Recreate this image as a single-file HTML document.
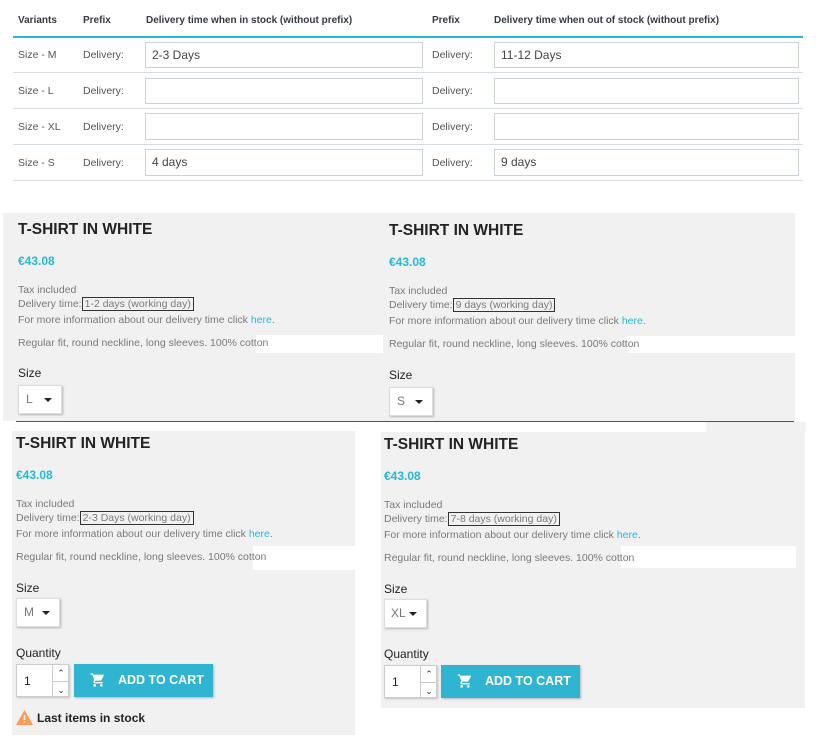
<!DOCTYPE html>
<html><head><meta charset="utf-8"><style>
*{margin:0;padding:0;box-sizing:border-box}
body{width:823px;height:750px;background:#fff;position:relative;overflow:hidden;font-family:"Liberation Sans",sans-serif;color:#363a41}
.a{position:absolute;white-space:nowrap}
.th{font-size:10px;font-weight:bold;color:#363a41}
.td{font-size:10.5px;color:#555}
.inp{position:absolute;border:1px solid #ccd3d8;background:#fff;font-size:12px;color:#444;padding-left:6px;line-height:25px}
.sep{position:absolute;left:13px;width:790px;height:1px;background:#d5dde2}
.g{position:absolute;background:#f1f1f1}
.w{position:absolute;background:#fff}
.t{font-size:15.5px;font-weight:bold;color:#232323}
.p{font-size:12px;font-weight:bold;color:#24b9d7}
.s{font-size:10.5px;color:#7a7a7a}
.s a{color:#24b9d7;text-decoration:none}
.box{border:1px solid #333;padding:0 2px;color:#7a7a7a}
.lbl{font-size:12px;color:#232323}
.sel{position:absolute;background:#fff;box-shadow:1px 1px 2px rgba(0,0,0,.25);border:1px solid #ddd;font-size:12px;color:#7a7a7a;padding-left:7px;line-height:26px}
.sel:after{content:"";position:absolute;right:9px;top:12px;border:4px solid transparent;border-top:4px solid #222;border-bottom:0}
.q{position:absolute;background:#fff;border:1px solid #ccc;box-shadow:1px 1px 2px rgba(0,0,0,.2);width:53px;height:33px}
.q span{position:absolute;left:7px;top:9px;font-size:12px;color:#232323}
.q i{position:absolute;left:35px;width:17px;height:16px;border-left:1px solid #ccc;font-style:normal;font-size:9px;text-align:center;line-height:16px;color:#333}
.btn{position:absolute;background:#2fb5d2;width:139px;height:33px;box-shadow:1px 1px 2px rgba(0,0,0,.25);color:#fff;font-weight:bold;font-size:12.5px;line-height:33px}
.btn svg{position:absolute;left:16px;top:8px}
.btn b{position:absolute;left:44px}
</style></head><body>
<div class="a th" style="left:18px;top:15px">Variants</div>
<div class="a th" style="left:83px;top:15px">Prefix</div>
<div class="a th" style="left:146px;top:15px">Delivery time when in stock (without prefix)</div>
<div class="a th" style="left:432px;top:15px">Prefix</div>
<div class="a th" style="left:494px;top:15px">Delivery time when out of stock (without prefix)</div>
<div class="a" style="left:13px;top:36px;width:790px;height:2px;background:#25b9d7"></div>

<div class="a td" style="left:18px;top:49px">Size - M</div><div class="a td" style="left:83px;top:49px">Delivery:</div>
<div class="inp" style="left:145px;top:42px;width:278px;height:26px">2-3 Days</div>
<div class="a td" style="left:432px;top:49px">Delivery:</div>
<div class="inp" style="left:494px;top:42px;width:305px;height:26px">11-12 Days</div>
<div class="sep" style="top:72px"></div>

<div class="a td" style="left:18px;top:85px">Size - L</div><div class="a td" style="left:83px;top:85px">Delivery:</div>
<div class="inp" style="left:145px;top:78px;width:278px;height:26px"></div>
<div class="a td" style="left:432px;top:85px">Delivery:</div>
<div class="inp" style="left:494px;top:78px;width:305px;height:26px"></div>
<div class="sep" style="top:108px"></div>

<div class="a td" style="left:18px;top:121px">Size - XL</div><div class="a td" style="left:83px;top:121px">Delivery:</div>
<div class="inp" style="left:145px;top:113px;width:278px;height:27px"></div>
<div class="a td" style="left:432px;top:121px">Delivery:</div>
<div class="inp" style="left:494px;top:113px;width:305px;height:27px"></div>
<div class="sep" style="top:144px"></div>

<div class="a td" style="left:18px;top:157px">Size - S</div><div class="a td" style="left:83px;top:157px">Delivery:</div>
<div class="inp" style="left:145px;top:149px;width:278px;height:27px">4 days</div>
<div class="a td" style="left:432px;top:157px">Delivery:</div>
<div class="inp" style="left:494px;top:149px;width:305px;height:27px">9 days</div>
<div class="sep" style="top:180px"></div>

<div class="g" style="left:3px;top:213px;width:792px;height:208px"></div>
<div class="w" style="left:256px;top:335px;width:127px;height:18px"></div>
<div class="w" style="left:627px;top:336px;width:168px;height:17px"></div>
<div class="a" style="left:16px;top:421px;width:778px;height:1px;background:#555"></div>
<div class="g" style="left:706px;top:422px;width:100px;height:10px"></div>
<div class="g" style="left:12px;top:431px;width:343px;height:304px"></div>
<div class="g" style="left:381px;top:432px;width:424px;height:276px"></div>
<div class="w" style="left:253px;top:546px;width:102px;height:24px"></div>
<div class="w" style="left:621px;top:546px;width:175px;height:22px"></div>

<div class="a t" style="left:18px;top:221px">T-SHIRT IN WHITE</div>
<div class="a p" style="left:18px;top:254px">€43.08</div>
<div class="a s" style="left:18px;top:284px">Tax included</div>
<div class="a s" style="left:18px;top:298px">Delivery time:<span class="box">1-2 days (working day)</span></div>
<div class="a s" style="left:18px;top:314px">For more information about our delivery time click <a>here</a>.</div>
<div class="a s" style="left:18px;top:337px">Regular fit, round neckline, long sleeves. 100% cotton</div>
<div class="a lbl" style="left:18px;top:366px">Size</div>
<div class="sel" style="left:18px;top:385px;width:44px;height:29px">L</div>

<div class="a t" style="left:389px;top:222px">T-SHIRT IN WHITE</div>
<div class="a p" style="left:389px;top:255px">€43.08</div>
<div class="a s" style="left:389px;top:285px">Tax included</div>
<div class="a s" style="left:389px;top:299px">Delivery time:<span class="box">9 days (working day)</span></div>
<div class="a s" style="left:389px;top:315px">For more information about our delivery time click <a>here</a>.</div>
<div class="a s" style="left:389px;top:338px">Regular fit, round neckline, long sleeves. 100% cotton</div>
<div class="a lbl" style="left:389px;top:368px">Size</div>
<div class="sel" style="left:389px;top:387px;width:44px;height:29px">S</div>

<div class="a t" style="left:16px;top:435px">T-SHIRT IN WHITE</div>
<div class="a p" style="left:16px;top:468px">€43.08</div>
<div class="a s" style="left:16px;top:498px">Tax included</div>
<div class="a s" style="left:16px;top:512px">Delivery time:<span class="box">2-3 Days (working day)</span></div>
<div class="a s" style="left:16px;top:528px">For more information about our delivery time click <a>here</a>.</div>
<div class="a s" style="left:16px;top:551px">Regular fit, round neckline, long sleeves. 100% cotton</div>
<div class="a lbl" style="left:16px;top:581px">Size</div>
<div class="sel" style="left:16px;top:598px;width:44px;height:29px">M</div>
<div class="a lbl" style="left:16px;top:646px">Quantity</div>
<div class="q" style="left:16px;top:664px"><span>1</span><i style="top:0">&#8963;</i><i style="top:16px;border-top:1px solid #ccc">&#8964;</i></div>
<div class="btn" style="left:74px;top:664px"><svg width="16" height="16" viewBox="0 0 24 24"><path fill="#fff" d="M7 18a2 2 0 1 0 0 4 2 2 0 0 0 0-4zM1 2v2h2l3.6 7.6-1.4 2.4c-.1.3-.2.6-.2 1 0 1.1.9 2 2 2h12v-2H7.4c-.1 0-.2-.1-.2-.2v-.1l.9-1.7h7.4c.8 0 1.4-.4 1.7-1l3.6-6.5c.1-.2.2-.3.2-.5 0-.6-.4-1-1-1H5.2L4.3 2H1zm16 16a2 2 0 1 0 0 4 2 2 0 0 0 0-4z"/></svg><b>ADD TO CART</b></div>
<svg class="a" style="left:16px;top:710px" width="17" height="15" viewBox="0 0 17 15"><path fill="#ff9a52" d="M8.5 0L17 15H0z"/><rect x="7.7" y="5" width="1.6" height="5" fill="#fff"/><rect x="7.7" y="11" width="1.6" height="1.6" fill="#fff"/></svg>
<div class="a" style="left:37px;top:711px;font-size:12px;font-weight:bold;color:#232323">Last items in stock</div>

<div class="a t" style="left:384px;top:436px">T-SHIRT IN WHITE</div>
<div class="a p" style="left:384px;top:469px">€43.08</div>
<div class="a s" style="left:384px;top:499px">Tax included</div>
<div class="a s" style="left:384px;top:513px">Delivery time:<span class="box">7-8 days (working day)</span></div>
<div class="a s" style="left:384px;top:529px">For more information about our delivery time click <a>here</a>.</div>
<div class="a s" style="left:384px;top:552px">Regular fit, round neckline, long sleeves. 100% cotton</div>
<div class="a lbl" style="left:384px;top:582px">Size</div>
<div class="sel" style="left:384px;top:599px;width:43px;height:29px;padding-left:6px">XL</div>
<div class="a lbl" style="left:384px;top:647px">Quantity</div>
<div class="q" style="left:384px;top:665px"><span>1</span><i style="top:0">&#8963;</i><i style="top:16px;border-top:1px solid #ccc">&#8964;</i></div>
<div class="btn" style="left:441px;top:665px"><svg width="16" height="16" viewBox="0 0 24 24"><path fill="#fff" d="M7 18a2 2 0 1 0 0 4 2 2 0 0 0 0-4zM1 2v2h2l3.6 7.6-1.4 2.4c-.1.3-.2.6-.2 1 0 1.1.9 2 2 2h12v-2H7.4c-.1 0-.2-.1-.2-.2v-.1l.9-1.7h7.4c.8 0 1.4-.4 1.7-1l3.6-6.5c.1-.2.2-.3.2-.5 0-.6-.4-1-1-1H5.2L4.3 2H1zm16 16a2 2 0 1 0 0 4 2 2 0 0 0 0-4z"/></svg><b>ADD TO CART</b></div>
</body></html>
